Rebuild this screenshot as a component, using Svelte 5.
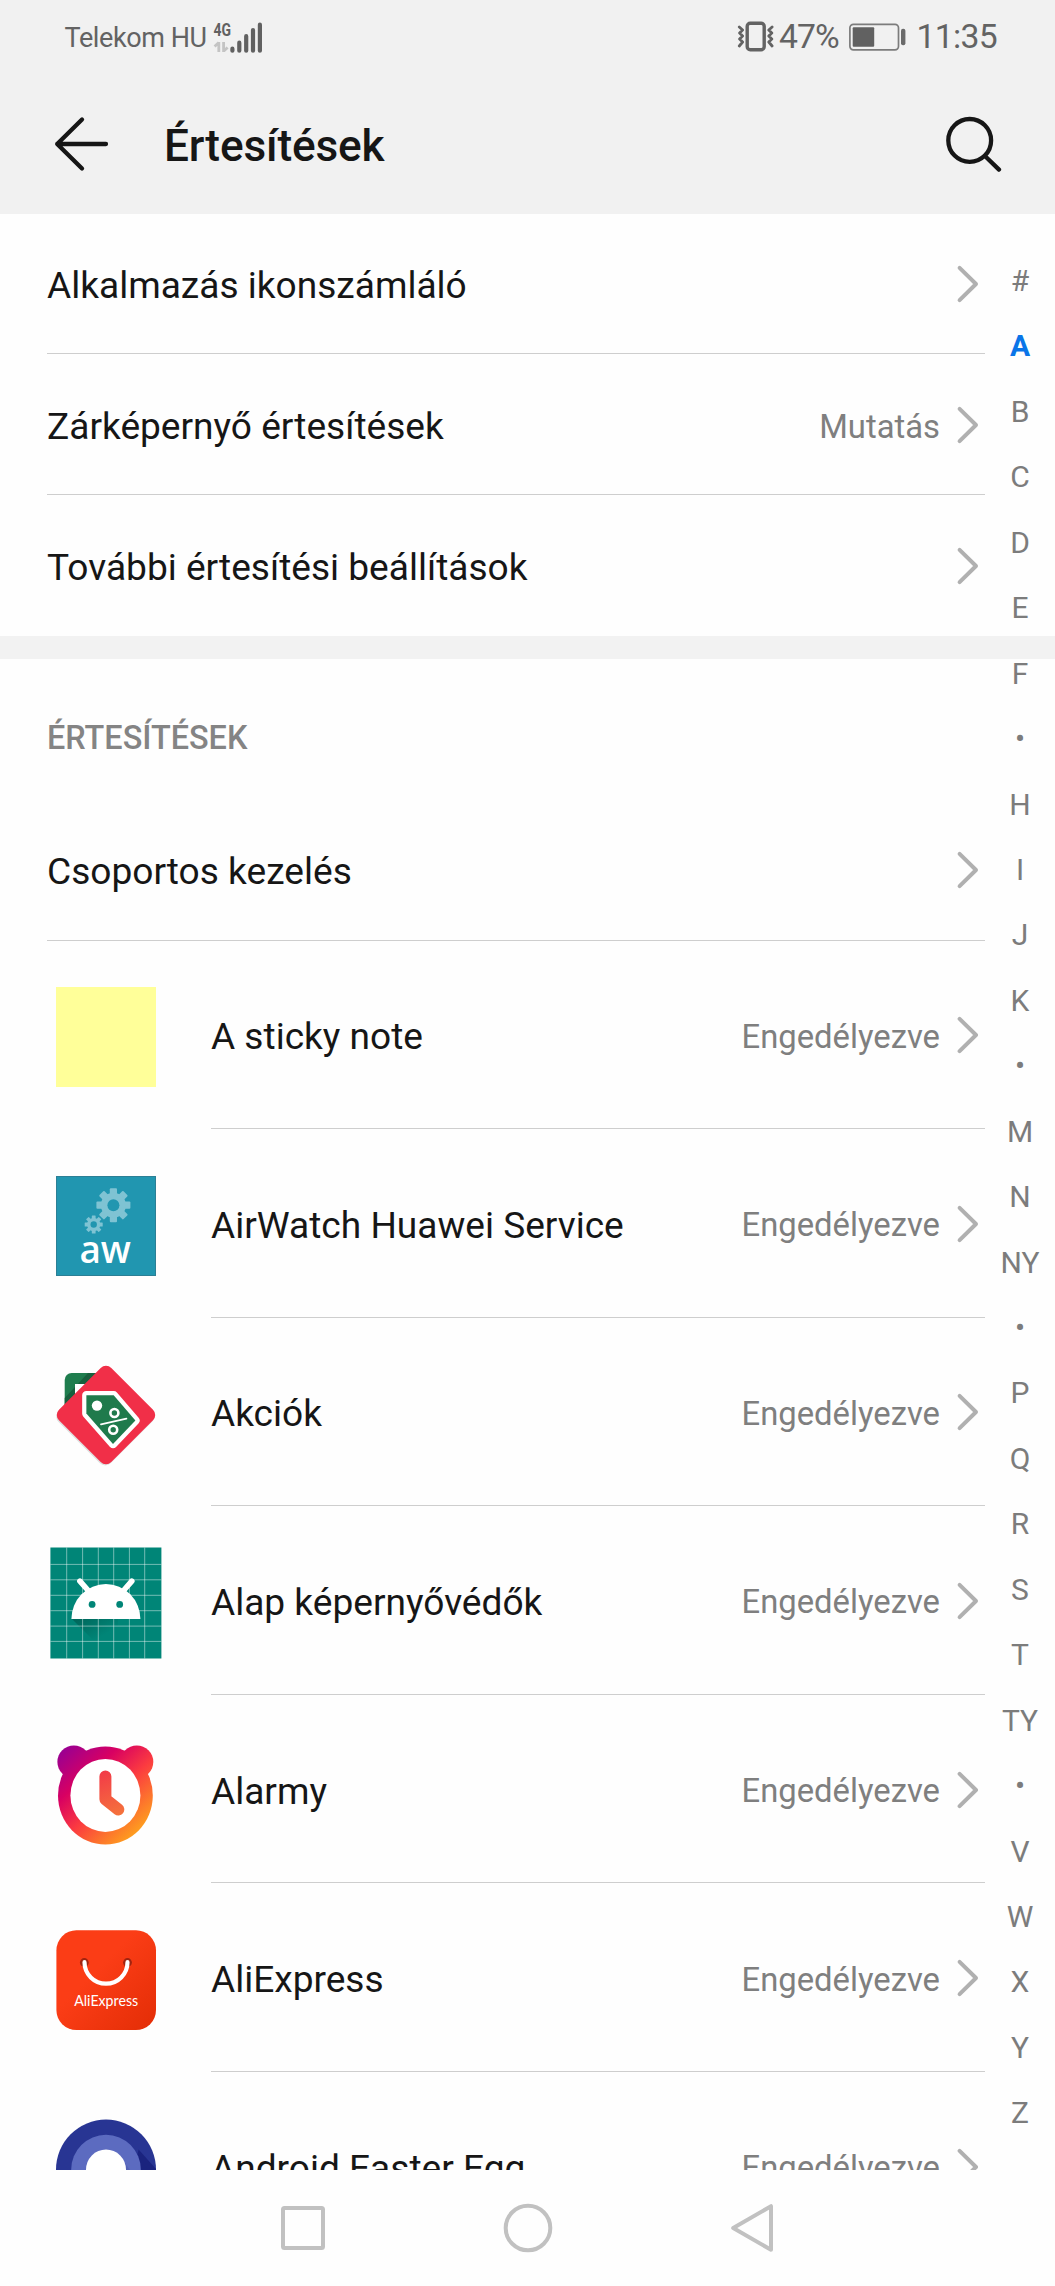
<script lang="ts">
	const settings = [
		{ label: 'Alkalmazás ikonszámláló', value: '' },
		{ label: 'Zárképernyő értesítések', value: 'Mutatás' },
		{ label: 'További értesítési beállítások', value: '' }
	];

	const apps = [
		{ id: 'note', name: 'A sticky note' },
		{ id: 'airwatch', name: 'AirWatch Huawei Service' },
		{ id: 'akciok', name: 'Akciók' },
		{ id: 'screensaver', name: 'Alap képernyővédők' },
		{ id: 'alarmy', name: 'Alarmy' },
		{ id: 'aliexpress', name: 'AliExpress' },
		{ id: 'easteregg', name: 'Android Easter Egg' }
	];

	const letters = '# A B C D E F • H I J K • M N NY • P Q R S T TY • V W X Y Z'.split(' ');
	let active = $state('A');

	const gridX = [16.7, 32.6, 48.3, 63.7, 79.4, 94.7];
	const gridY = [17.4, 32.8, 48.3, 63.7, 79.1, 94.4];
</script>

{#snippet chevron()}
	<svg class="chevron" width="24" height="40" viewBox="0 0 24 40">
		<path d="M3.6 3.8 20 20 3.6 36.2" fill="none" stroke="#b0b0b0" stroke-width="4" stroke-linecap="round" stroke-linejoin="round" />
	</svg>
{/snippet}

{#snippet gear(cx: number, cy: number, r: number)}
	<g transform="translate({cx} {cy}) scale({r / 17})">
		{#each [0, 45, 90, 135] as angle}
			<rect x="-3.6" y="-17" width="7.2" height="34" rx="1" transform="rotate({angle})" fill="#7fc3d3" />
		{/each}
		<circle r="12.5" fill="#7fc3d3" />
		<circle r="6" fill="#2196b0" />
	</g>
{/snippet}

{#snippet appIcon(id: string)}
	<svg class="app-icon" width="112" height="112" viewBox="0 0 112 112">
		{#if id === 'note'}
			<rect x="6" y="6" width="100" height="100" fill="#ffff99" />
		{:else if id === 'airwatch'}
			<rect x="6.5" y="6.5" width="99" height="99" fill="#2196b0" stroke="#2c7f95" />
			{@render gear(63.4, 35.2, 17)}
			{@render gear(43.7, 54.5, 9)}
			<text x="29.4" y="92.8" class="aw-text" textLength="51.5" lengthAdjust="spacingAndGlyphs">aw</text>
		{:else if id === 'akciok'}
			<rect x="14.7" y="15" width="50" height="50" rx="7" fill="#1f7d4e" />
			<path d="M14.7 40 38 15h10L14.7 52Z" fill="#17603d" />
			<rect x="25" y="26" width="16" height="16" fill="#fff" />
			<rect x="19.5" y="21.5" width="74" height="74" rx="8" transform="rotate(45 56 57)" fill="#000" opacity="0.12" />
			<rect x="19" y="20" width="74" height="74" rx="7.5" transform="rotate(45 56 57)" fill="#f12f48" />
			<path d="M36.4 37.3h27.3l21.7 25.3L63 86 36.4 55.6Z" fill="#1f7a4c" stroke="#fff" stroke-width="8.5" stroke-linejoin="round" />
			<path d="M36.4 37.3h27.3l21.7 25.3L63 86 36.4 55.6Z" fill="#1f7a4c" />
			<circle cx="47" cy="47.6" r="5.2" fill="#fff" />
			<circle cx="64.4" cy="55" r="4" fill="none" stroke="#fff" stroke-width="2.6" />
			<circle cx="63.2" cy="71.8" r="4" fill="none" stroke="#fff" stroke-width="2.6" />
			<path d="M51 66.3 76.4 60.6" stroke="#fff" stroke-width="1.8" stroke-linecap="round" />
		{:else if id === 'screensaver'}
			<rect x="0.4" y="0.5" width="111" height="111" fill="#008577" />
			<path d="M22 72h46v34L48 98Z" fill="url(#droid-shadow)" />
			{#each gridX as x}
				<path d="M{x} 0.5v111" stroke="#fff" stroke-opacity="0.45" stroke-width="1" />
			{/each}
			{#each gridY as y}
				<path d="M0.4 {y}h111" stroke="#fff" stroke-opacity="0.45" stroke-width="1" />
			{/each}
			<path d="M21.4 72.1a34.5 35.1 0 0 1 69 0Z" fill="#fff" />
			<path d="M29.9 34.2 39.5 45M81.8 34.2 72.3 45" stroke="#fff" stroke-width="5.6" stroke-linecap="round" />
			<circle cx="42.1" cy="57.4" r="3.4" fill="#008577" />
			<circle cx="69.7" cy="57.4" r="3.4" fill="#008577" />
		{:else if id === 'alarmy'}
			<g fill="url(#alarmy-fill)">
				<circle cx="23.9" cy="25.9" r="16.5" />
				<circle cx="86.8" cy="25.9" r="16.5" />
				<ellipse cx="55.4" cy="59.5" rx="47.4" ry="49" />
			</g>
			<ellipse cx="55.4" cy="59.4" rx="35" ry="36.5" fill="#fff" />
			<path d="M55.4 40.5V63.2L68.3 73.5" fill="none" stroke="url(#hand-fill)" stroke-width="12" stroke-linecap="round" stroke-linejoin="round" />
		{:else if id === 'aliexpress'}
			<rect x="6.4" y="6.3" width="99.6" height="99.7" rx="20" fill="url(#ali-fill)" />
			<circle cx="34.3" cy="38.5" r="4.4" fill="#a02410" />
			<circle cx="77.5" cy="38.5" r="4.4" fill="#a02410" />
			<path d="M34.5 38.2a21.5 21.5 0 0 0 43 0" fill="none" stroke="#fff" stroke-width="4.2" stroke-linecap="round" />
			<text x="24.2" y="82" class="ali-text" textLength="64" lengthAdjust="spacingAndGlyphs">AliExpress</text>
		{:else}
			<circle cx="56" cy="56.6" r="50" fill="#283593" />
			<path d="M88.6 36.5 106 56v16H80Z" fill="#1a237e" />
			<circle cx="56" cy="56.6" r="34.8" fill="#5c6bc0" />
			<path d="M75 50 86 66H70Z" fill="#5361b5" />
			<circle cx="56" cy="56.6" r="20" fill="#fff" />
		{/if}
	</svg>
{/snippet}

<div class="screen">
	<!-- Shared gradients for the app icons -->
	<svg class="defs" width="0" height="0" aria-hidden="true">
		<defs>
			<linearGradient id="alarmy-fill" gradientUnits="userSpaceOnUse" x1="12" y1="16" x2="88" y2="100">
				<stop offset="0" stop-color="#9c0090" />
				<stop offset="0.3" stop-color="#d80062" />
				<stop offset="0.58" stop-color="#fb3b40" />
				<stop offset="1" stop-color="#fea51c" />
			</linearGradient>
			<linearGradient id="hand-fill" gradientUnits="userSpaceOnUse" x1="50" y1="36" x2="68" y2="80">
				<stop offset="0" stop-color="#f23a48" />
				<stop offset="1" stop-color="#f5733c" />
			</linearGradient>
			<linearGradient id="ali-fill" x1="0" y1="0" x2="1" y2="1">
				<stop offset="0.4" stop-color="#fb3d16" />
				<stop offset="1" stop-color="#e32d06" />
			</linearGradient>
			<linearGradient id="droid-shadow" x1="0" y1="0" x2="0.7" y2="0.9">
				<stop offset="0" stop-color="#00574c" stop-opacity="0.7" />
				<stop offset="0.7" stop-color="#00574c" stop-opacity="0" />
			</linearGradient>
		</defs>
	</svg>

	<header class="top">
		<div class="status-bar">
			<div class="status-left">
				<span class="carrier">Telekom HU</span>
				<svg class="signal" width="52" height="34" viewBox="0 0 52 34">
					<text x="0.5" y="16.4" class="net-text" textLength="17.5" lengthAdjust="spacingAndGlyphs">4G</text>
					<path d="M5.8 22v10M1.6 26.4l4.2-4M10.6 22v10M10.8 31l3.8-3.6" stroke="#c4c4c4" stroke-width="2.8" fill="none" />
					<path d="M19.4 28.7v2M26.3 22.7v8M33.2 16.2v14.5M40 10v20.7M46.9 4.7v26" stroke="#616161" stroke-width="4.2" stroke-linecap="round" />
				</svg>
			</div>
			<div class="status-right">
				<svg class="vibrate" width="40" height="32" viewBox="0 0 40 32">
					<rect x="11.2" y="2.2" width="17" height="26.6" rx="3" fill="none" stroke="#636363" stroke-width="3.4" />
					<path d="M3.3 6 6.6 9 3.6 12 6.6 15 3.6 18 6.6 21 3.3 25M36.1 6 32.8 9 35.8 12 32.8 15 35.8 18 32.8 21 36.1 25" fill="none" stroke="#636363" stroke-width="2.8" stroke-linecap="round" stroke-linejoin="round" />
				</svg>
				<span class="percent">47%</span>
				<svg class="battery" width="58" height="30" viewBox="0 0 58 30">
					<rect x="0.9" y="2.3" width="48.6" height="25.5" rx="3.5" fill="none" stroke="#7c7c7c" stroke-width="1.7" />
					<rect x="3.7" y="5.3" width="21.5" height="19.4" rx="1" fill="#616161" />
					<rect x="52" y="6.8" width="4.4" height="16.4" rx="2" fill="#6a6a6a" />
				</svg>
				<span class="clock">11:35</span>
			</div>
		</div>
		<div class="title-bar">
			<svg width="56" height="56" viewBox="0 0 56 56">
				<path d="M29 3.5 4.2 28 29 52.5M4.2 28H53" fill="none" stroke="#161616" stroke-width="4.3" stroke-linecap="round" stroke-linejoin="round" />
			</svg>
			<h1>Értesítések</h1>
			<svg width="58" height="58" viewBox="0 0 58 58">
				<circle cx="25.7" cy="25.4" r="21.4" fill="none" stroke="#161616" stroke-width="4.3" />
				<path d="M41.2 41.3 55 54.6" stroke="#161616" stroke-width="4.3" stroke-linecap="round" />
			</svg>
		</div>
	</header>

	<main>
		<ul class="group">
			{#each settings as item}
				<li class="row">
					<span class="label">{item.label}</span>
					<span class="value">{item.value}</span>
					{@render chevron()}
				</li>
			{/each}
		</ul>

		<div class="band"></div>

		<h2>ÉRTESÍTÉSEK</h2>
		<div class="row batch">
			<span class="label">Csoportos kezelés</span>
			{@render chevron()}
		</div>

		<ul class="apps">
			{#each apps as app (app.id)}
				<li class="app">
					{@render appIcon(app.id)}
					<div class="row">
						<span class="label">{app.name}</span>
						<span class="value">Engedélyezve</span>
						{@render chevron()}
					</div>
				</li>
			{/each}
		</ul>

		<nav class="index">
			{#each letters as letter}
				<button class:active={letter === active} onclick={() => (active = letter)}>{letter}</button>
			{/each}
		</nav>
	</main>

	<footer class="nav-bar">
		<svg width="50" height="52" viewBox="0 0 50 52">
			<rect x="5" y="6" width="40" height="40" rx="1.5" fill="none" stroke="#c1c1c1" stroke-width="4" />
		</svg>
		<svg width="50" height="52" viewBox="0 0 50 52">
			<circle cx="25" cy="26" r="22.3" fill="none" stroke="#c1c1c1" stroke-width="4" />
		</svg>
		<svg width="50" height="52" viewBox="0 0 50 52">
			<path d="M43 4.2V47.8L5.2 26Z" fill="none" stroke="#c1c1c1" stroke-width="4" stroke-linejoin="round" />
		</svg>
	</footer>
</div>

<style>
	:global(body) {
		background: #fefefe;
	}

	.screen {
		display: flex;
		flex-direction: column;
		width: 1055px;
		height: 2286px;
		overflow: hidden;
		background: #fefefe;
		color: #161616;
		font-family: Roboto, 'Liberation Sans', sans-serif;
	}

	.defs {
		position: absolute;
	}

	.top {
		height: 213.5px;
		background: #f1f1f1;
		flex: none;
	}

	.status-bar {
		display: flex;
		justify-content: space-between;
		align-items: center;
		height: 74px;
		padding: 0 58px 0 64.5px;
		color: #636363;
	}

	.status-left,
	.status-right {
		display: flex;
		align-items: center;
	}

	.carrier {
		padding-top: 1px;
		font-size: 27px;
		letter-spacing: -0.4px;
		line-height: 74px;
	}

	.signal {
		margin-left: 6.5px;
	}

	.net-text {
		font-size: 18.8px;
		font-weight: 700;
		fill: #616161;
	}

	.percent,
	.clock {
		font-size: 33.7px;
		letter-spacing: -0.7px;
		line-height: 74px;
	}

	.percent {
		margin-left: 3.5px;
		letter-spacing: -1px;
	}

	.battery {
		margin: 0 10px 0 10px;
	}

	.title-bar {
		display: flex;
		align-items: center;
		height: 139.5px;
		padding: 0 53px 0 53px;
	}

	h1 {
		flex: 1;
		margin: 4px 0 0 55px;
		font-size: 44.2px;
		font-weight: 500;
		letter-spacing: -0.15px;
	}

	main {
		position: relative;
		height: 1956.8px;
		overflow: hidden;
		flex: none;
	}

	ul {
		list-style: none;
		margin: 0;
		padding: 0;
	}

	.row {
		display: flex;
		align-items: center;
		box-sizing: border-box;
		height: 140.7px;
		margin: 0 70px 0 47px;
		padding: 1px 5px 0 0;
		border-bottom: 1px solid #cecece;
	}

	.group .row:last-child {
		border-bottom-color: transparent;
	}

	.label {
		flex: 1;
		padding-top: 4px;
		font-size: 37.1px;
		white-space: nowrap;
	}

	.value {
		padding-top: 4px;
		margin-right: 16px;
		font-size: 32.8px;
		color: #7f7f7f;
	}

	.chevron {
		flex: none;
		margin-top: 1px;
	}

	.band {
		height: 23.5px;
		background: #f2f2f2;
	}

	h2 {
		margin: 0;
		padding: 1px 47px 0;
		height: 139px;
		box-sizing: border-box;
		font-size: 32.4px;
		font-weight: 500;
		line-height: 157px;
		color: #848484;
	}

	.batch {
		height: 142.5px;
	}

	.app {
		display: flex;
		align-items: center;
		height: 188.55px;
		padding-left: 49.6px;
	}

	.app-icon {
		flex: none;
		margin-top: 5px;
	}

	.app .row {
		flex: 1;
		height: 100%;
		margin-left: 49.4px;
	}

	.aw-text {
		font-family: 'Open Sans', 'Noto Sans', sans-serif;
		font-size: 37px;
		font-weight: 600;
		fill: #fff;
	}

	.ali-text {
		font-family: Lato, sans-serif;
		font-size: 15px;
		fill: #fff;
	}

	.index {
		position: absolute;
		top: 34.3px;
		right: 0;
		width: 70px;
		display: flex;
		flex-direction: column;
	}

	.index button {
		height: 65.45px;
		padding: 0;
		border: none;
		background: none;
		font: 400 30px Roboto, sans-serif;
		color: #7c7c7c;
		cursor: pointer;
	}

	.index .active {
		font-weight: 700;
		color: #0a75e8;
	}

	.nav-bar {
		display: flex;
		justify-content: center;
		align-items: center;
		gap: 175px;
		height: 115.7px;
	}
</style>
